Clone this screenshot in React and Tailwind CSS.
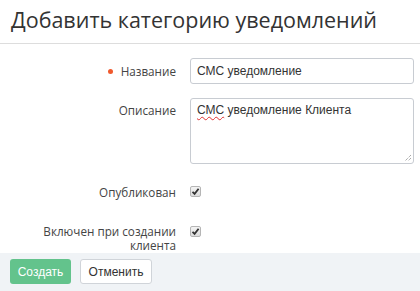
import React from 'react';

const Check = () => (
  <span className="flex items-center justify-center w-[11px] h-[11px] rounded-[2px] border border-[#b5b5b5] bg-gradient-to-b from-[#f4f4f4] to-[#dcdcdc]">
    <svg width="9" height="9" viewBox="0 0 9 9">
      <path d="M1.5 4.8 L3.6 6.9 L7.6 1.8" fill="none" stroke="#333" strokeWidth="1.8" />
    </svg>
  </span>
);

const Label = ({ children, required, className = "" }) => (
  <div className={`w-[190px] shrink-0 pl-[26px] pr-[14px] text-right text-[11.7px] leading-[14px] text-[#444] ${className}`} style={{ fontFamily: '"Open Sans", sans-serif' }}>
    {required && <span className="inline-block w-[5px] h-[5px] rounded-full bg-[#f0592d] mr-[8px] align-middle relative -top-[1px]"></span>}
    {children}
  </div>
);

export default function App() {
  return (
    <div className="w-[420px] h-[291px] bg-white flex flex-col overflow-hidden">
      <div className="h-[44px] px-[11px] pt-[5px] border-b border-[#dddddd] text-[21.5px] leading-[30px] text-[#333]" style={{ fontFamily: '"Open Sans", sans-serif' }}>
        Добавить категорию уведомлений
      </div>

      <div className="flex-1 flex flex-col">
        <div className="flex items-center mt-[14px]">
          <Label required>Название</Label>
          <input
            defaultValue="СМС уведомление"
            className="w-[224px] h-[26px] border border-[#c8ccd2] rounded-[3px] px-[6px] text-[12px] text-[#333] outline-none"
            style={{ fontFamily: '"Liberation Sans", Arial, sans-serif' }}
          />
        </div>

        <div className="flex items-start mt-[14px]">
          <Label className="pt-[5px]">Описание</Label>
          <div
            className="relative w-[224px] h-[66px] border border-[#c8ccd2] rounded-[3px] px-[6px] pt-[4px] text-[12px] leading-[14px] text-[#333]"
            style={{ fontFamily: '"Liberation Sans", Arial, sans-serif' }}
          >
            <span className="underline decoration-wavy decoration-[#e03030] decoration-[1px] underline-offset-[2px]">СМС</span> уведомление Клиента
            <svg className="absolute right-[1px] bottom-[1px]" width="8" height="8" viewBox="0 0 8 8">
              <path d="M7 1 L1 7 M7 4 L4 7" stroke="#888" strokeWidth="1" strokeDasharray="1 1" />
            </svg>
          </div>
        </div>

        <div className="flex items-center mt-[16px] h-[23px]">
          <Label>Опубликован</Label>
          <Check />
        </div>

        <div className="flex items-start mt-[21px]">
          <Label>Включен при создании клиента</Label>
          <div className="flex pt-[2px]"><Check /></div>
        </div>
      </div>

      <div className="h-[38px] bg-[#f0f3f6] flex items-start gap-[9px] px-[10px] pt-[6px]" style={{ fontFamily: '"Liberation Sans", Arial, sans-serif' }}>
        <button className="h-[25px] w-[61px] rounded-[3px] bg-[#63c38c] text-white text-[12px]">Создать</button>
        <button className="h-[25px] w-[72px] rounded-[3px] bg-white border border-[#d0d4d9] text-[#333] text-[12px]">Отменить</button>
      </div>
    </div>
  );
}
